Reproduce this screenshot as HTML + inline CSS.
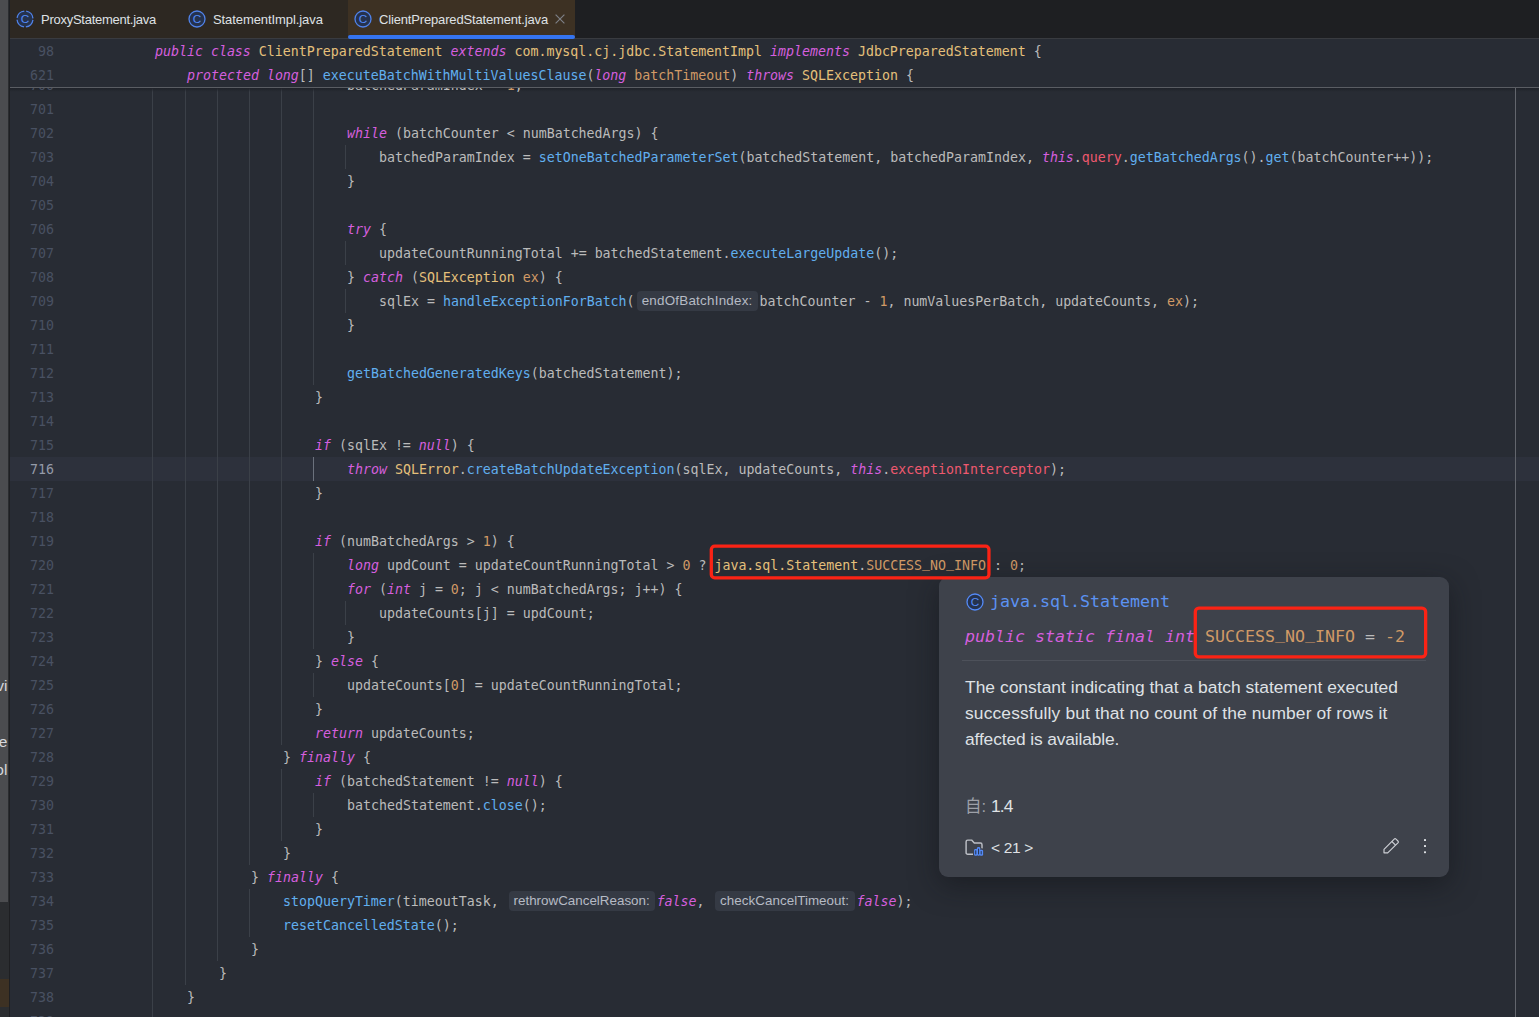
<!DOCTYPE html>
<html lang="en"><head><meta charset="utf-8"><title>ClientPreparedStatement.java</title>
<style>
html,body{margin:0;padding:0}
body{width:1539px;height:1017px;overflow:hidden;position:relative;background:#282c34;color:#bbbbbb;font-family:"Liberation Sans","Noto Sans CJK SC",sans-serif}
.abs{position:absolute}
.mono,.ln,.cl{font-family:'DejaVu Sans Mono','Liberation Mono',monospace;font-size:13.289px;line-height:24px;white-space:pre}
.ln{position:absolute;left:10px;width:44px;text-align:right;color:#495162;height:24px;padding-top:1px;box-sizing:border-box}
.ln.cur{color:#959ba9}
.cl{position:absolute;height:24px;color:#bbbbbb;padding-top:1px;box-sizing:border-box}
.k{color:#d55fde;font-style:italic}
.f{color:#61afef}
.c{color:#e5c07b}
.n{color:#d19a66}
.v{color:#ef596f}
.h{display:inline-block;height:20px;line-height:20px;vertical-align:top;margin-top:1px;background:#353a44;border-radius:4px;text-align:center;overflow:hidden}
.hb{font-family:"Liberation Sans",sans-serif;font-size:13.4px;line-height:20px;color:#b6bbc5;display:inline-block;position:relative;top:0px}
.gap{display:inline-block;height:1px}
.g{position:absolute;width:1px;background:#3b4048}
.u{position:relative;top:-.19em}

.tab{position:absolute;top:11px;font-size:13px;line-height:18px;color:#dfe1e5;white-space:nowrap}
.pm{font-family:'DejaVu Sans Mono','Liberation Mono',monospace;font-size:16.61px;line-height:26px;white-space:pre;color:#bbbbbb}
</style></head><body>

<div class="abs" style="left:0;top:0;width:9px;height:1017px;background:#2b2d30"></div>
<div class="abs" style="left:0;top:0;width:8px;height:902px;background:#4b4c4f"></div>
<div class="abs" style="left:0;top:979px;width:9px;height:28px;background:#3d3123"></div>
<div class="abs" style="left:9px;top:0;width:1px;height:1017px;background:#1e1f22"></div>
<div class="abs" style="left:-20px;top:677px;width:27.4px;overflow:hidden;font-size:15.5px;line-height:18px;color:#d5d7db;text-align:right;white-space:nowrap">vi</div>
<div class="abs" style="left:-20px;top:733px;width:27.4px;overflow:hidden;font-size:15.5px;line-height:18px;color:#d5d7db;text-align:right;white-space:nowrap">e</div>
<div class="abs" style="left:-20px;top:761px;width:27.4px;overflow:hidden;font-size:15.5px;line-height:18px;color:#d5d7db;text-align:right;white-space:nowrap">ol</div>
<div class="abs" style="left:10px;top:457px;width:1529px;height:24px;background:#2d313c"></div>
<div class="g" style="left:152px;top:88px;height:969px"></div>
<div class="g" style="left:185px;top:88px;height:897px"></div>
<div class="g" style="left:217px;top:88px;height:873px"></div>
<div class="g" style="left:249px;top:88px;height:777px"></div>
<div class="g" style="left:249px;top:889px;height:48px"></div>
<div class="g" style="left:281px;top:88px;height:657px"></div>
<div class="g" style="left:281px;top:769px;height:72px"></div>
<div class="g" style="left:313px;top:88px;height:297px"></div>
<div class="g" style="left:313px;top:457px;height:24px;background:#6b717d"></div>
<div class="g" style="left:313px;top:553px;height:96px"></div>
<div class="g" style="left:313px;top:673px;height:24px"></div>
<div class="g" style="left:313px;top:793px;height:24px"></div>
<div class="g" style="left:345px;top:145px;height:24px"></div>
<div class="g" style="left:345px;top:241px;height:24px"></div>
<div class="g" style="left:345px;top:289px;height:24px"></div>
<div class="g" style="left:345px;top:601px;height:24px"></div>
<div class="abs" style="left:10px;top:88px;width:1529px;height:4px;background:linear-gradient(#1f2229,rgba(40,44,52,0))"></div>
<div class="abs" style="left:1515px;top:88px;width:1px;height:929px;background:#63666d"></div>
<div class="ln" style="top:73px">700</div>
<div class="cl" style="left:347px;top:73px">batchedParamIndex = <span class="n">1</span>;</div>
<div class="ln" style="top:97px">701</div>
<div class="ln" style="top:121px">702</div>
<div class="cl" style="left:347px;top:121px"><i class="k">while</i> (batchCounter &lt; numBatchedArgs) {</div>
<div class="ln" style="top:145px">703</div>
<div class="cl" style="left:379px;top:145px">batchedParamIndex = <span class="f">setOneBatchedParameterSet</span>(batchedStatement, batchedParamIndex, <i class="k">this</i>.<span class="v">query</span>.<span class="f">getBatchedArgs</span>().<span class="f">get</span>(batchCounter++));</div>
<div class="ln" style="top:169px">704</div>
<div class="cl" style="left:347px;top:169px">}</div>
<div class="ln" style="top:193px">705</div>
<div class="ln" style="top:217px">706</div>
<div class="cl" style="left:347px;top:217px"><i class="k">try</i> {</div>
<div class="ln" style="top:241px">707</div>
<div class="cl" style="left:379px;top:241px">updateCountRunningTotal += batchedStatement.<span class="f">executeLargeUpdate</span>();</div>
<div class="ln" style="top:265px">708</div>
<div class="cl" style="left:347px;top:265px">} <i class="k">catch</i> (<span class="c">SQLException</span> <span class="n">ex</span>) {</div>
<div class="ln" style="top:289px">709</div>
<div class="cl" style="left:379px;top:289px">sqlEx = <span class="f">handleExceptionForBatch</span>(<span class="h" style="width:121px;margin-left:2px"><span class="hb" style="letter-spacing:0.23px">endOfBatchIndex:</span></span><span class="gap" style="width:2px"></span>batchCounter - <span class="n">1</span>, numValuesPerBatch, updateCounts, <span class="n">ex</span>);</div>
<div class="ln" style="top:313px">710</div>
<div class="cl" style="left:347px;top:313px">}</div>
<div class="ln" style="top:337px">711</div>
<div class="ln" style="top:361px">712</div>
<div class="cl" style="left:347px;top:361px"><span class="f">getBatchedGeneratedKeys</span>(batchedStatement);</div>
<div class="ln" style="top:385px">713</div>
<div class="cl" style="left:315px;top:385px">}</div>
<div class="ln" style="top:409px">714</div>
<div class="ln" style="top:433px">715</div>
<div class="cl" style="left:315px;top:433px"><i class="k">if</i> (sqlEx != <i class="k">null</i>) {</div>
<div class="ln cur" style="top:457px">716</div>
<div class="cl" style="left:347px;top:457px"><i class="k">throw</i> <span class="c">SQLError</span>.<span class="f">createBatchUpdateException</span>(sqlEx, updateCounts, <i class="k">this</i>.<span class="v">exceptionInterceptor</span>);</div>
<div class="ln" style="top:481px">717</div>
<div class="cl" style="left:315px;top:481px">}</div>
<div class="ln" style="top:505px">718</div>
<div class="ln" style="top:529px">719</div>
<div class="cl" style="left:315px;top:529px"><i class="k">if</i> (numBatchedArgs &gt; <span class="n">1</span>) {</div>
<div class="ln" style="top:553px">720</div>
<div class="cl" style="left:347px;top:553px"><i class="k">long</i> updCount = updateCountRunningTotal &gt; <span class="n">0</span> ? <span class="c">java.sql.Statement</span>.<span class="n">SUCCESS<span class="u">_</span>NO<span class="u">_</span>INFO</span> : <span class="n">0</span>;</div>
<div class="ln" style="top:577px">721</div>
<div class="cl" style="left:347px;top:577px"><i class="k">for</i> (<i class="k">int</i> j = <span class="n">0</span>; j &lt; numBatchedArgs; j++) {</div>
<div class="ln" style="top:601px">722</div>
<div class="cl" style="left:379px;top:601px">updateCounts[j] = updCount;</div>
<div class="ln" style="top:625px">723</div>
<div class="cl" style="left:347px;top:625px">}</div>
<div class="ln" style="top:649px">724</div>
<div class="cl" style="left:315px;top:649px">} <i class="k">else</i> {</div>
<div class="ln" style="top:673px">725</div>
<div class="cl" style="left:347px;top:673px">updateCounts[<span class="n">0</span>] = updateCountRunningTotal;</div>
<div class="ln" style="top:697px">726</div>
<div class="cl" style="left:315px;top:697px">}</div>
<div class="ln" style="top:721px">727</div>
<div class="cl" style="left:315px;top:721px"><i class="k">return</i> updateCounts;</div>
<div class="ln" style="top:745px">728</div>
<div class="cl" style="left:283px;top:745px">} <i class="k">finally</i> {</div>
<div class="ln" style="top:769px">729</div>
<div class="cl" style="left:315px;top:769px"><i class="k">if</i> (batchedStatement != <i class="k">null</i>) {</div>
<div class="ln" style="top:793px">730</div>
<div class="cl" style="left:347px;top:793px">batchedStatement.<span class="f">close</span>();</div>
<div class="ln" style="top:817px">731</div>
<div class="cl" style="left:315px;top:817px">}</div>
<div class="ln" style="top:841px">732</div>
<div class="cl" style="left:283px;top:841px">}</div>
<div class="ln" style="top:865px">733</div>
<div class="cl" style="left:251px;top:865px">} <i class="k">finally</i> {</div>
<div class="ln" style="top:889px">734</div>
<div class="cl" style="left:283px;top:889px"><span class="f">stopQueryTimer</span>(timeoutTask, <span class="h" style="width:146px;margin-left:2px"><span class="hb" style="letter-spacing:0px">rethrowCancelReason:</span></span><span class="gap" style="width:2px"></span><i class="k">false</i>, <span class="h" style="width:140px;margin-left:2px"><span class="hb" style="letter-spacing:0.05px">checkCancelTimeout:</span></span><span class="gap" style="width:2px"></span><i class="k">false</i>);</div>
<div class="ln" style="top:913px">735</div>
<div class="cl" style="left:283px;top:913px"><span class="f">resetCancelledState</span>();</div>
<div class="ln" style="top:937px">736</div>
<div class="cl" style="left:251px;top:937px">}</div>
<div class="ln" style="top:961px">737</div>
<div class="cl" style="left:219px;top:961px">}</div>
<div class="ln" style="top:985px">738</div>
<div class="cl" style="left:187px;top:985px">}</div>
<div class="ln" style="top:1009px">739</div>
<div class="abs" style="left:10px;top:39px;width:1529px;height:48px;background:#282c34"></div>
<div class="abs" style="left:10px;top:87px;width:1529px;height:1px;background:#5a5d63"></div>
<div class="ln" style="top:39px">98</div>
<div class="cl" style="left:155px;top:39px"><i class="k">public class</i> <span class="c">ClientPreparedStatement</span> <i class="k">extends</i> <span class="c">com.mysql.cj.jdbc.StatementImpl</span> <i class="k">implements</i> <span class="c">JdbcPreparedStatement</span> {</div>
<div class="ln" style="top:63px">621</div>
<div class="cl" style="left:187px;top:63px"><i class="k">protected</i> <i class="k">long</i>[] <span class="f">executeBatchWithMultiValuesClause</span>(<i class="k">long</i> <span class="n">batchTimeout</span>) <i class="k">throws</i> <span class="c">SQLException</span> {</div>
<!-- tab bar -->
<div class="abs" style="left:10px;top:0;width:1529px;height:38px;background:#1e1f22"></div>
<div class="abs" style="left:10px;top:0;width:338px;height:38px;background:#2d2822"></div>
<div class="abs" style="left:348px;top:0;width:227px;height:38px;background:#3d3123"></div>
<div class="abs" style="left:10px;top:38px;width:1529px;height:1px;background:#393b40"></div>
<div class="abs" style="left:348px;top:35px;width:227px;height:4px;background:#3574f0;border-radius:2px"></div>
<svg class="abs" style="left:10px;top:0" width="600" height="38" viewBox="10 0 600 38">
  <g fill="#25324d" stroke="#5083ea" stroke-width="1.3">
    <circle cx="25" cy="19" r="8" stroke-dasharray="10.6 1.97" stroke-dashoffset="-0.98"/>
    <circle cx="197" cy="19" r="8"/>
    <circle cx="363" cy="19" r="8"/>
  </g>
  <g fill="#548af7" font-family="Liberation Sans, sans-serif" font-size="11.8" text-anchor="middle">
    <text x="25" y="23.3">C</text>
    <text x="197" y="23.3">C</text>
    <text x="363" y="23.3">C</text>
  </g>
  <path d="M555.6 14.6 L564.4 23.4 M564.4 14.6 L555.6 23.4" stroke="#7d8087" stroke-width="1.15" fill="none"/>
</svg>
<div class="tab" style="left:41px;letter-spacing:-0.26px">ProxyStatement.java</div>
<div class="tab" style="left:213px;letter-spacing:-0.08px">StatementImpl.java</div>
<div class="tab" style="left:379px;letter-spacing:-0.16px">ClientPreparedStatement.java</div>


<!-- doc popup -->
<div class="abs" id="pop" style="left:939px;top:577px;width:510px;height:300px;background:#3e424b;border-radius:9px;box-shadow:0 8px 28px 0 rgba(15,17,22,.5)">
  <svg class="abs" style="left:26px;top:15px" width="20" height="20" viewBox="0 0 20 20">
    <circle cx="10" cy="10" r="8" fill="#25324d" stroke="#548af7" stroke-width="1.3"/>
    <text x="10" y="14.3" fill="#548af7" font-family="Liberation Sans, sans-serif" font-size="11.8" text-anchor="middle">C</text>
  </svg>
  <div class="abs pm" style="left:51px;top:12px;color:#5c92f2">java.sql.Statement</div>
  <div class="abs pm" style="left:26px;top:47px"><i class="k">public static final int</i> <span class="n">SUCCESS<span class="u">_</span>NO<span class="u">_</span>INFO</span> = <span class="n">-2</span></div>
  <div class="abs" style="left:23px;top:83px;width:464px;height:1px;background:#4d515a"></div>
  <div class="abs" style="left:26px;top:97px;font-size:17.4px;line-height:26px;color:#dfe1e5;white-space:nowrap"><span style="letter-spacing:.033px">The constant indicating that a batch statement executed</span><br><span style="letter-spacing:.143px">successfully but that no count of the number of rows it</span><br><span style="letter-spacing:-.138px">affected is available.</span></div>
  <div class="abs" style="left:26px;top:216px;font-size:17.4px;line-height:26px;color:#dfe1e5;white-space:nowrap"><span style="color:#9da0a8;font-size:16.5px">自:</span> <span style="letter-spacing:-.9px">1.4</span></div>
  <svg class="abs" style="left:25px;top:261px" width="20" height="20" viewBox="0 0 20 20" fill="none">
    <path d="M2.1 14.7 V3.7 a1.6 1.6 0 0 1 1.6 -1.6 h3.9 l2.7 2.96 h6.1 a1.6 1.6 0 0 1 1.6 1.6 v3.9 M2.1 14.7 a1.6 1.6 0 0 0 1.6 1.6 h5.3" stroke="#bcbfc6" stroke-width="1.45" stroke-linejoin="round"/>
    <g fill="#3e424b" stroke="#3e424b" stroke-width="2"><rect x="10.1" y="11.1" width="3.4" height="6.65" rx="1.2"/><rect x="12.9" y="9" width="3.4" height="8.75" rx="1.4"/><rect x="15.7" y="11.7" width="3.4" height="6.05" rx="1.2"/></g>
    <g fill="#548af7"><rect x="10.1" y="11.1" width="3.4" height="6.65" rx="1.2"/><rect x="12.9" y="9" width="3.4" height="8.75" rx="1.4"/><rect x="15.7" y="11.7" width="3.4" height="6.05" rx="1.2"/></g>
    <g fill="#25324d"><rect x="11.25" y="12.3" width="1.05" height="4.2" rx=".4"/><rect x="14.05" y="10.5" width="1.05" height="6" rx=".4"/><rect x="16.7" y="12.9" width=".95" height="3.6" rx=".4"/></g>
  </svg>
  <div class="abs" style="left:52px;top:258px;font-size:15.5px;line-height:26px;color:#dfe1e5;white-space:nowrap;letter-spacing:-.35px">&lt; 21 &gt;</div>
  <svg class="abs" style="left:444px;top:261px" width="16" height="16" viewBox="0 0 16 16" fill="none" stroke="#ced0d6" stroke-width="1.15" stroke-linejoin="round">
    <path d="M1 14.8 V11.3 L11.2 1.1 a1.3 1.3 0 0 1 1.8 0 L14.9 3 a1.3 1.3 0 0 1 0 1.8 L4.7 14.8 Z"/>
    <path d="M8.9 3.5 L12.5 7.1"/>
  </svg>
  <div class="abs" style="left:485px;top:262px;width:2.4px;height:2.4px;background:#dfe1e5;border-radius:.6px;box-shadow:0 6.1px 0 #dfe1e5,0 12.2px 0 #dfe1e5"></div>
</div>

<!-- red annotation 1 -->
<svg class="abs" style="left:700px;top:535px" width="760" height="135" viewBox="700 535 760 135" fill="none" stroke="#fb2315" stroke-width="3.3"><rect x="711.3" y="546.1" width="277.65" height="31.8" rx="3.4"/><rect x="1195.3" y="608.1" width="230.35" height="48.8" rx="3.6"/></svg>
<!-- red annotation 2 -->

</body></html>
